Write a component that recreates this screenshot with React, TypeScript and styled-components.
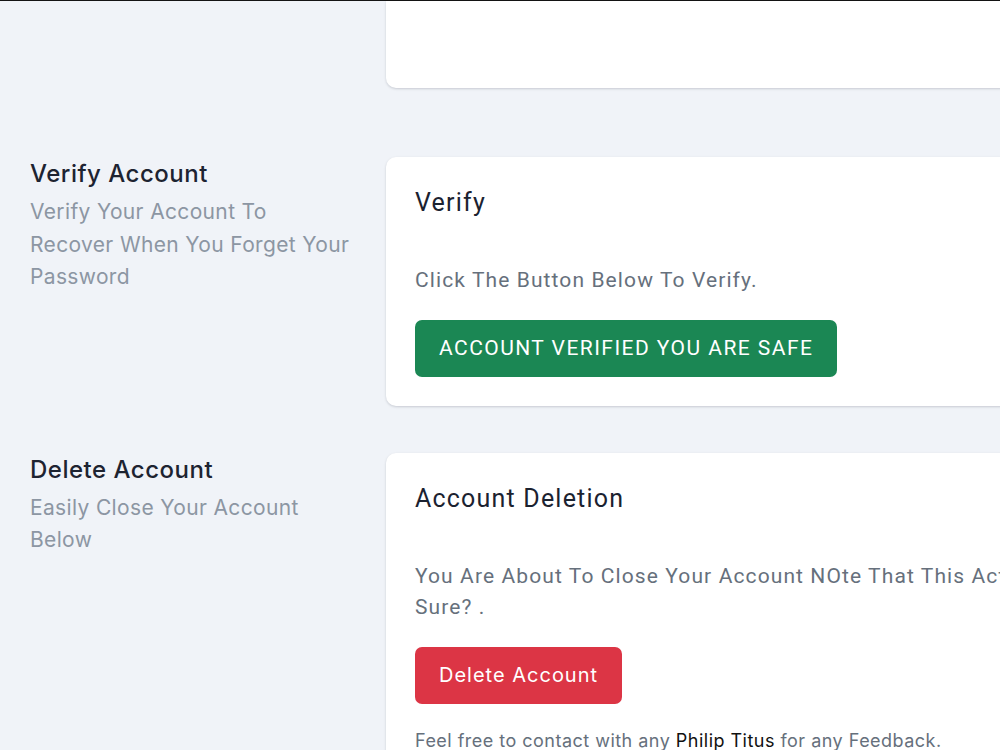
import React from "react";
import styled, { createGlobalStyle } from "styled-components";

const Global = createGlobalStyle`
  html, body { margin: 0; padding: 0; }
  body {
    background: #f0f3f8;
    font-family: Inter, "Noto Sans", sans-serif;
    overflow: hidden;
    width: 1000px;
    height: 750px;
  }
`;

const Page = styled.div`
  border-top: 1px solid #141414;
  padding-left: 30px;
  display: flex;
  flex-direction: column;
`;

const Row = styled.section<{ $gap: number }>`
  display: grid;
  grid-template-columns: 356px 1000px;
  margin-top: ${(p) => p.$gap}px;
`;

const Side = styled.div`
  padding-top: 1px;
`;

const SideTitle = styled.h2`
  margin: 0;
  font-family: Inter, sans-serif;
  font-size: 24px;
  font-weight: 500;
  letter-spacing: 0.5px;
  line-height: 32px;
  color: #1d2331;
`;

const SideText = styled.p`
  margin: 6px 0 0;
  font-family: Inter, sans-serif;
  font-size: 21px;
  letter-spacing: 0.35px;
  line-height: 32.5px;
  color: #8c96a3;
  max-width: 324px;
`;

const Card = styled.div<{ $top?: boolean }>`
  background: #fff;
  border-radius: ${(p) => (p.$top ? "0 0 10px 10px" : "10px")};
  box-shadow: 0 1px 3px rgba(15, 23, 42, 0.12), 0 1px 2px rgba(15, 23, 42, 0.06);
  padding: 30px 29px 29px;
  box-sizing: border-box;
`;

const TopCard = styled(Card)`
  height: 87px;
  padding: 0;
`;

const CardTitle = styled.h3`
  margin: 0;
  font-family: Roboto, sans-serif;
  font-size: 25px;
  font-weight: 400;
  letter-spacing: 1.2px;
  line-height: 31px;
  color: #1b2230;
`;

const CardText = styled.p`
  margin: 47px 0 23px;
  width: 910px;
  font-family: Roboto, sans-serif;
  font-size: 21px;
  letter-spacing: 1.1px;
  line-height: 31.5px;
  color: #66707c;
`;

const Button = styled.button<{ $variant: "success" | "danger" }>`
  display: inline-flex;
  align-items: center;
  height: 57px;
  padding: 0 24px;
  border: none;
  border-radius: 7px;
  color: #fff;
  cursor: pointer;
  ${(p) =>
    p.$variant === "success"
      ? `background: #1b8754; font-family: Roboto, sans-serif; font-size: 21px; letter-spacing: 1.45px; text-transform: uppercase;`
      : `background: #dc3545; font-family: Inter, sans-serif; font-size: 20px; letter-spacing: 1px;`}
`;

const Footer = styled.p`
  margin: 24px 0 0;
  font-family: Inter, sans-serif;
  font-size: 18px;
  letter-spacing: 0.48px;
  line-height: 26px;
  color: #66707c;
  white-space: nowrap;
`;

const Name = styled.span`
  color: #111;
`;

export default function App() {
  return (
    <>
      <Global />
      <Page>
        <Row $gap={0}>
          <Side />
          <TopCard $top />
        </Row>
        <Row $gap={69}>
          <Side>
            <SideTitle>Verify Account</SideTitle>
            <SideText>Verify Your Account To Recover When You Forget Your Password</SideText>
          </Side>
          <Card>
            <CardTitle>Verify</CardTitle>
            <CardText>Click The Button Below To Verify.</CardText>
            <Button $variant="success">Account Verified You Are Safe</Button>
          </Card>
        </Row>
        <Row $gap={47}>
          <Side>
            <SideTitle>Delete Account</SideTitle>
            <SideText>Easily Close Your Account Below</SideText>
          </Side>
          <Card>
            <CardTitle>Account Deletion</CardTitle>
            <CardText>
              You Are About To Close Your Account NOte That This Action Is Irreversible Are You Sure? .
            </CardText>
            <Button $variant="danger">Delete Account</Button>
            <Footer>
              Feel free to contact with any <Name>Philip Titus</Name> for any Feedback.
            </Footer>
          </Card>
        </Row>
      </Page>
    </>
  );
}
